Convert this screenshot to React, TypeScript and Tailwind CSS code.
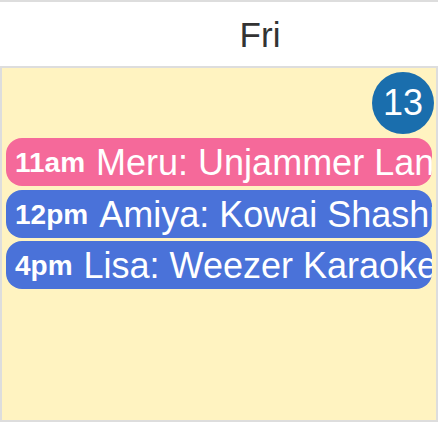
import React from "react";

const events = [
  { time: "11am", title: "Meru: Unjammer Lanes", color: "bg-[#f5699a]" },
  { time: "12pm", title: "Amiya: Kowai Shashin", color: "bg-[#4a72d9]" },
  { time: "4pm", title: "Lisa: Weezer Karaoke", color: "bg-[#4a72d9]" },
];

export default function App() {
  return (
    <div
      className="w-[438px] h-[422px] flex flex-col bg-white overflow-hidden"
      style={{ fontFamily: '"Liberation Sans", Arial, sans-serif' }}
    >
      <div className="border-t-2 border-b-2 border-[#dddddd] h-[68px] flex items-center justify-center pl-[82px]">
        <span className="text-[35px] text-[#333333] leading-none">Fri</span>
      </div>
      <div className="flex-1 bg-[#fff3c1] border-l-2 border-r-2 border-b-2 border-[#dddddd] flex flex-col">
        <div className="flex justify-end pt-[4px] pr-[2px]">
          <div className="w-[62px] h-[62px] rounded-full bg-[#1a6ead] flex items-center justify-center text-white text-[36px] leading-none">
            13
          </div>
        </div>
        <div className="flex flex-col gap-[3.5px] mt-[4px] px-[4px]">
          {events.map((e) => (
            <div
              key={e.time}
              className={`${e.color} h-[48px] rounded-[16px] flex items-center pl-[9px] pt-[2px] overflow-hidden whitespace-nowrap text-white`}
            >
              <span className="font-bold text-[28px] leading-none">{e.time}</span>
              <span className="ml-[11px] text-[36px] leading-none">{e.title}</span>
            </div>
          ))}
        </div>
      </div>
    </div>
  );
}
